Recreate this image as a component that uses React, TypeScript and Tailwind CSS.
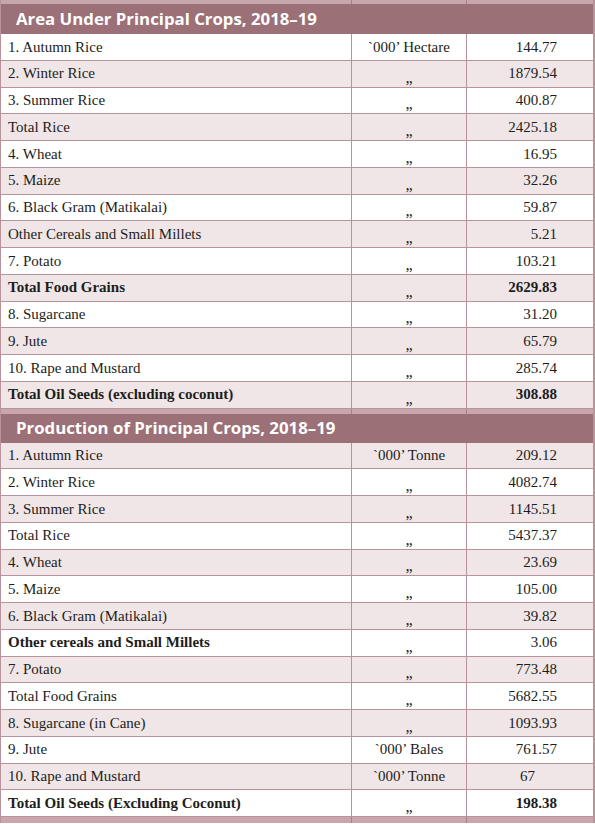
type Row = {
  name: string;
  unit?: string;
  value: string;
  bold?: boolean;
  boldValue?: boolean;
  pr?: string;
};

const DITTO = '„';

const areaRows: Row[] = [
  { name: '1. Autumn Rice', unit: '`000’ Hectare', value: '144.77' },
  { name: '2. Winter Rice', value: '1879.54' },
  { name: '3. Summer Rice', value: '400.87' },
  { name: 'Total Rice', value: '2425.18' },
  { name: '4. Wheat', value: '16.95' },
  { name: '5. Maize', value: '32.26' },
  { name: '6. Black Gram (Matikalai)', value: '59.87' },
  { name: 'Other Cereals and Small Millets', value: '5.21' },
  { name: '7. Potato', value: '103.21' },
  { name: 'Total Food Grains', value: '2629.83', bold: true, boldValue: true },
  { name: '8. Sugarcane', value: '31.20' },
  { name: '9. Jute', value: '65.79' },
  { name: '10. Rape and Mustard', value: '285.74' },
  { name: 'Total Oil Seeds (excluding coconut)', value: '308.88', bold: true, boldValue: true },
];

const productionRows: Row[] = [
  { name: '1. Autumn Rice', unit: '`000’ Tonne', value: '209.12' },
  { name: '2. Winter Rice', value: '4082.74' },
  { name: '3. Summer Rice', value: '1145.51' },
  { name: 'Total Rice', value: '5437.37' },
  { name: '4. Wheat', value: '23.69' },
  { name: '5. Maize', value: '105.00' },
  { name: '6. Black Gram (Matikalai)', value: '39.82' },
  { name: 'Other cereals and Small Millets', value: '3.06', bold: true },
  { name: '7. Potato', value: '773.48' },
  { name: 'Total Food Grains', value: '5682.55' },
  { name: '8. Sugarcane (in Cane)', value: '1093.93' },
  { name: '9. Jute', unit: '`000’ Bales', value: '761.57' },
  { name: '10. Rape and Mustard', unit: '`000’ Tonne', value: '67', pr: 'pr-[58px]' },
  { name: 'Total Oil Seeds (Excluding Coconut)', value: '198.38', bold: true, boldValue: true },
];

function Strip({ h }: { h: string }) {
  return (
    <div className={`grid grid-cols-[351px_115px_1fr] bg-[#c8a7ac] ${h}`}>
      <div className="border-r border-[#a9808a]" />
      <div className="border-r border-[#a9808a]" />
      <div />
    </div>
  );
}

function Header({ title, h }: { title: string; h: string }) {
  return (
    <div
      className={`flex items-center bg-[#9c7077] pl-[15px] text-white text-[16.8px] font-bold font-['Open_Sans',sans-serif] ${h}`}
    >
      {title}
    </div>
  );
}

function Rows({ rows, startPink }: { rows: Row[]; startPink: boolean }) {
  return (
    <div>
      {rows.map((r, i) => {
        const pink = startPink ? i % 2 === 0 : i % 2 === 1;
        return (
          <div
            key={i}
            className={`grid grid-cols-[351px_115px_1fr] h-[26.75px] border-b border-[#b9939a] text-[15px] text-[#1d1d1b] ${
              pink ? 'bg-[#f0e6e7]' : 'bg-white'
            }`}
          >
            <div
              className={`flex items-center pl-[7px] border-r border-[#b9939a] ${r.bold ? 'font-bold' : ''}`}
            >
              {r.name}
            </div>
            <div className="flex items-center justify-center border-r border-[#b9939a]">
              {r.unit ? (
                <span>{r.unit}</span>
              ) : (
                <span className="translate-y-[4px] text-[16px]">{DITTO}</span>
              )}
            </div>
            <div
              className={`flex items-center justify-end ${r.pr ?? 'pr-[36px]'} ${r.boldValue ? 'font-bold' : ''}`}
            >
              {r.value}
            </div>
          </div>
        );
      })}
    </div>
  );
}

export default function App() {
  return (
    <div className="w-[595px] h-[824px] overflow-hidden bg-white font-['Liberation_Serif',serif]">
      <div className="border-l border-r-2 border-[#b9939a]">
        <Strip h="h-[4px]" />
        <Header title="Area Under Principal Crops, 2018–19" h="h-[30px]" />
        <Rows rows={areaRows} startPink={false} />
        <Strip h="h-[5px]" />
        <Header title="Production of Principal Crops, 2018–19" h="h-[29px]" />
        <Rows rows={productionRows} startPink={true} />
        <Strip h="h-[6px]" />
      </div>
    </div>
  );
}
